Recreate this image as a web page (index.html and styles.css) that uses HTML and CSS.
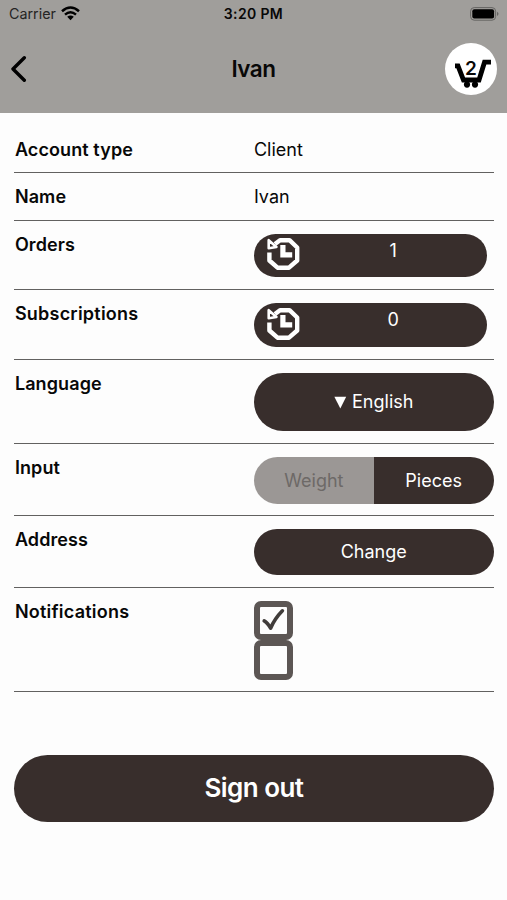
FILE: index.html
```html
<!DOCTYPE html>
<html lang="en">
<head>
<meta charset="utf-8">
<meta name="viewport" content="width=device-width, initial-scale=1">
<title>Ivan</title>
<link rel="stylesheet" href="styles.css">
</head>
<body>
<svg class="defs" width="0" height="0" aria-hidden="true">
  <symbol id="history" viewBox="0 0 36 36">
    <path d="M4.4 15.5V23.5L12.5 30.7H24L32.2 23.5V10.5L24.5 3.2H15L10 7" fill="none" stroke="#fff" stroke-width="4.4" stroke-linejoin="round"/>
    <path d="M3.7 3.2V11.2L11.4 10Z" fill="#382e2c" stroke="#fff" stroke-width="2.6" stroke-linejoin="round"/>
    <path d="M17.9 8V17.8H27.2" fill="none" stroke="#fff" stroke-width="5.2"/>
  </symbol>
</svg>
<header class="header">
  <div class="status">
    <div class="carrier">Carrier
      <svg width="19" height="15" viewBox="0 0 19 15"><g fill="none" stroke="#000" stroke-width="2.5"><path d="M1 5.3Q9.5-2.3 18 5.3"/><path d="M4 8.6Q9.5 3.8 15 8.6"/></g><path d="M6.2 10.8Q9.5 8.2 12.8 10.8L9.5 14.2Z"/></svg>
    </div>
    <div class="time">3:20 PM</div>
    <svg class="battery" width="30" height="14" viewBox="0 0 30 14"><rect x=".6" y=".6" width="25" height="12.6" rx="3.6" fill="none" stroke="#656462"/><rect x="2.3" y="2.3" width="21.8" height="9.2" rx="2"/><path d="M27 4.8Q30 6.9 27 9Z" fill="#656462"/></svg>
  </div>
  <div class="nav">
    <svg class="back" width="17" height="26" viewBox="0 0 17 26"><path d="M14.3 1.8 3 13l11.3 11.2" fill="none" stroke="#000" stroke-width="3.4" stroke-linecap="round" stroke-linejoin="round"/></svg>
    <h1>Ivan</h1>
    <div class="cart">
      <svg width="52" height="52" viewBox="0 0 52 52"><path d="M10 22.8H13L18.5 37H34L39.5 19.2H46" fill="none" stroke="#000" stroke-width="4.8"/><circle cx="22" cy="41.6" r="3.1"/><circle cx="30" cy="41.6" r="3.1"/></svg>
      <span>2</span>
    </div>
  </div>
</header>
<main>
  <div class="row"><b>Account type</b><span>Client</span></div>
  <div class="row"><b>Name</b><span>Ivan</span></div>
  <div class="row counter"><b>Orders</b><div class="pill"><svg width="36" height="36"><use href="#history"/></svg><span>1</span></div></div>
  <div class="row counter"><b class="long">Subscriptions</b><div class="pill"><svg width="36" height="36"><use href="#history"/></svg><span>0</span></div></div>
  <div class="row language"><b>Language</b><div class="pill"><svg width="13" height="13" viewBox="0 0 13 13"><path d="M.4.7H12.2L6.3 12.4Z" fill="#fff"/></svg>English</div></div>
  <div class="row input"><b>Input</b><div class="toggle"><span class="off">Weight</span><span class="on">Pieces</span></div></div>
  <div class="row address"><b>Address</b><div class="pill">Change</div></div>
  <div class="row notifications"><b class="long">Notifications</b><div class="checks">
    <div class="box"><svg width="28" height="28" viewBox="0 0 28 28"><path d="M4.2 13.8Q7.5 15.5 10.6 21.2Q14.8 11.5 22.4 3.8" fill="none" stroke="#403c3a" stroke-width="3.6" stroke-linecap="round" stroke-linejoin="round"/></svg></div>
    <div class="box"></div>
  </div></div>
  <div class="signout">Sign out</div>
</main>
</body>
</html>
```
FILE: styles.css
```css
* { box-sizing: border-box; }
body { margin: 0; min-height: 900px; background: #fdfdfd; color: #080808; font: 18px/22px Inter, "Liberation Sans", sans-serif; }
svg { display: block; flex: none; }
.defs { position: absolute; }
.header { height: 113px; background: #a09e9b; }
.status { display: grid; grid-template-columns: 1fr 1fr 1fr; align-items: center; height: 27px; padding: 0 7px 0 9px; font-size: 14.3px; }
.carrier { display: flex; align-items: center; gap: 5px; color: #252423; }
.time { text-align: center; font-weight: 600; font-size: 14px; letter-spacing: .35px; margin-left: -2px; }
.battery { justify-self: end; }
.nav { display: grid; grid-template-columns: 52px 1fr 52px; align-items: center; height: 84px; padding: 0 10px; }
h1 { margin: 0; text-align: center; font-size: 22.5px; font-weight: 600; letter-spacing: -.5px; }
.cart { position: relative; width: 52px; height: 52px; border-radius: 50%; background: #fff; }
.cart span { position: absolute; left: 0; top: 15px; width: 52px; text-align: center; font-size: 19px; font-weight: 600; }
main { padding: 12.5px 13.5px 0 14.4px; }
.row { display: grid; grid-template-columns: 1fr 1fr; align-items: start; height: 47.5px; padding-top: 13px; border-bottom: 1.4px solid #626160; }
.row b { font-weight: 600; letter-spacing: .1px; padding-left: .5px; }
.row b.long { letter-spacing: .23px; }
.counter { height: 69.7px; }
.language { height: 84px; }
.input, .address { height: 72.2px; }
.notifications { height: 103.6px; }
.pill { display: flex; align-items: center; justify-content: center; height: 46px; border-radius: 30px; background: #382e2c; color: #fff; }
.counter .pill { height: 43.5px; width: 233.5px; justify-content: flex-start; padding-left: 11px; }
.counter .pill span { flex: 1; text-align: center; padding: 0 2px 9px 0; }
.language .pill { height: 58.5px; gap: 5px; }
.toggle { display: grid; grid-template-columns: 1fr 1fr; height: 46.5px; text-align: center; line-height: 47px; }
.toggle .off { background: #9b9795; color: #6d6967; border-radius: 24px 0 0 24px; }
.toggle .on { background: #382e2c; color: #fff; border-radius: 0 24px 24px 0; }
.box { width: 39.5px; height: 39.2px; border: 6px solid #5c5654; border-radius: 7px; }
.signout { display: flex; align-items: center; justify-content: center; height: 67.5px; margin-top: 62.8px; border-radius: 34px; background: #382e2c; color: #fff; font-size: 26px; font-weight: 600; letter-spacing: -.55px; }
```
